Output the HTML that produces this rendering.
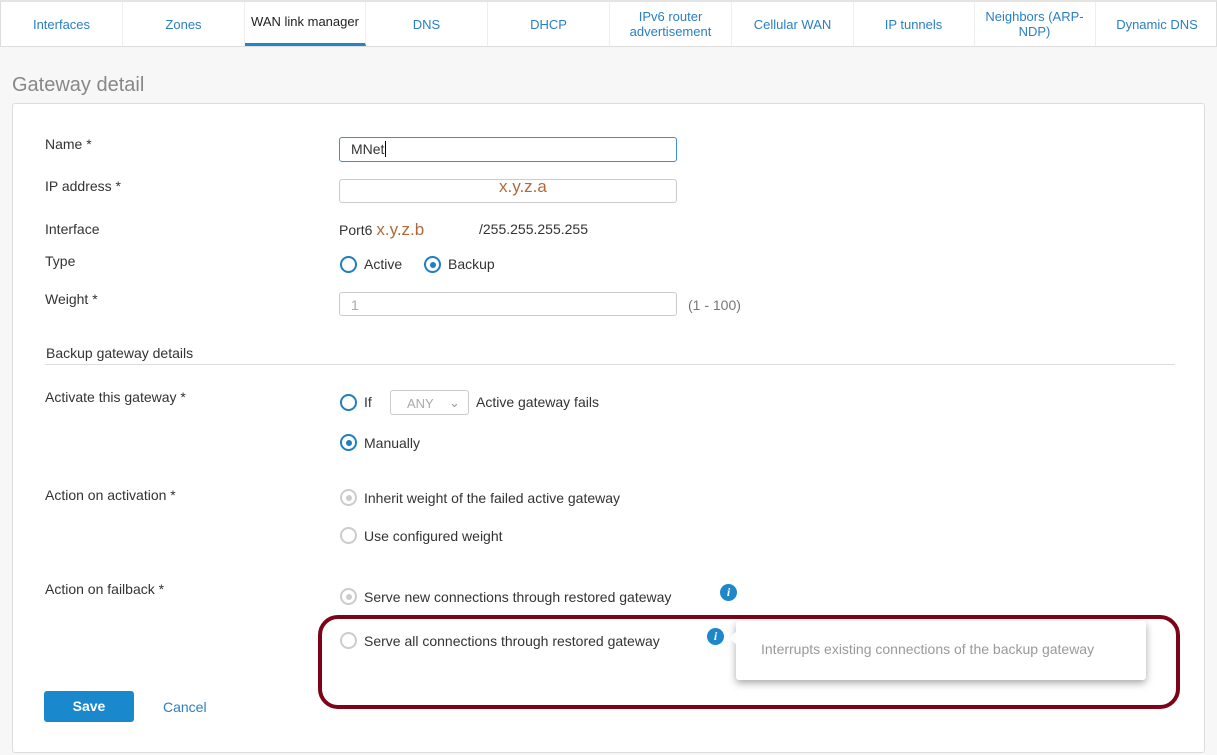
<!DOCTYPE html>
<html><head><meta charset="utf-8"><style>
*{box-sizing:border-box;margin:0;padding:0}
body{width:1217px;height:755px;background:#f7f7f7;font-family:"Liberation Sans",sans-serif;color:#333;position:relative;overflow:hidden;font-size:14px}
.tabs{position:absolute;left:0;top:0;width:1217px;height:47px;background:#fff;border:1px solid #ddd;border-top:2px solid #e4e4e4}
.tab{position:absolute;top:0;height:44px;width:122px;border-right:1px solid #eee;color:#2a7fc4;font-size:13px;text-align:center;display:flex;align-items:center;justify-content:center;line-height:15px}
.tab.act{color:#222;border-bottom:3px solid #1d87c9;padding-bottom:2px}
.a{position:absolute;white-space:nowrap}
h1{position:absolute;left:12px;top:74px;font-weight:normal;font-size:20px;color:#888}
.panel{position:absolute;left:12px;top:103px;width:1193px;height:650px;background:#fff;border:1px solid #ddd;border-radius:3px}
.inp{position:absolute;left:339px;width:338px;height:24px;border:1px solid #ccc;border-radius:3px;background:#fff}
.r{position:absolute;width:17px;height:17px;border-radius:50%;border:2px solid #1d7fc4;background:#fff}
.r.on::after{content:"";position:absolute;left:3.5px;top:3.5px;width:6px;height:6px;border-radius:50%;background:#1d7fc4}
.r.g{border-color:#ccc}
.r.g.on::after{background:#ccc}
.lbl{font-size:14px;color:#333}
.info{position:absolute;width:17px;height:17px;border-radius:50%;background:#1d87c9;color:#fff;font:italic bold 12px "Liberation Serif",serif;text-align:center;line-height:17px}
</style></head><body>
<div class="tabs">
<div class="tab" style="left:0">Interfaces</div>
<div class="tab" style="left:122px">Zones</div>
<div class="tab act" style="left:244px;width:121px">WAN link manager</div>
<div class="tab" style="left:365px">DNS</div>
<div class="tab" style="left:487px">DHCP</div>
<div class="tab" style="left:609px">IPv6 router<br>advertisement</div>
<div class="tab" style="left:731px">Cellular WAN</div>
<div class="tab" style="left:852px">IP tunnels</div>
<div class="tab" style="left:973px">Neighbors (ARP-<br>NDP)</div>
<div class="tab" style="left:1095px;border:none">Dynamic DNS</div>
</div>
<h1>Gateway detail</h1>
<div class="panel"></div>

<div class="a lbl" style="left:45px;top:136px">Name *</div>
<div class="inp" style="top:137px;border-color:#3b8fd0;height:25px"></div>
<div class="a lbl" style="left:351px;top:141px">MNet<span style="border-left:1px solid #000;margin-left:1px"></span></div>

<div class="a lbl" style="left:45px;top:178px">IP address *</div>
<div class="inp" style="top:179px"></div>
<div class="a" style="left:499px;top:177px;font-size:17px;color:#b06a3a">x.y.z.a</div>

<div class="a lbl" style="left:45px;top:221px">Interface</div>
<div class="a lbl" style="left:339px;top:220px">Port6 <span style="font-size:17px;color:#b06a3a">x.y.z.b</span></div>
<div class="a lbl" style="left:479px;top:221px">/255.255.255.255</div>

<div class="a lbl" style="left:45px;top:253px">Type</div>
<div class="r" style="left:340px;top:256px"></div><div class="a lbl" style="left:364px;top:256px">Active</div>
<div class="r on" style="left:424px;top:256px"></div><div class="a lbl" style="left:448px;top:256px">Backup</div>

<div class="a lbl" style="left:45px;top:291px">Weight *</div>
<div class="inp" style="top:292px"></div>
<div class="a" style="left:351px;top:297px;color:#aaa">1</div>
<div class="a" style="left:688px;top:297px;color:#777">(1 - 100)</div>

<div class="a lbl" style="left:46px;top:345px">Backup gateway details</div>
<div class="a" style="left:45px;top:364px;width:1130px;height:1px;background:#ddd"></div>

<div class="a lbl" style="left:45px;top:389px">Activate this gateway *</div>
<div class="r" style="left:340px;top:394px"></div><div class="a lbl" style="left:364px;top:394px">If</div>
<div class="a" style="left:390px;top:390px;width:79px;height:25px;border:1px solid #ccc;border-radius:3px;color:#aaa;font-size:13px;padding:5px 0 0 16px">ANY<span style="position:absolute;left:58px;top:4px;color:#999">&#8964;</span></div>
<div class="a lbl" style="left:476px;top:394px">Active gateway fails</div>
<div class="r on" style="left:340px;top:434px"></div><div class="a lbl" style="left:364px;top:435px">Manually</div>

<div class="a lbl" style="left:45px;top:487px">Action on activation *</div>
<div class="r g on" style="left:340px;top:489px"></div><div class="a lbl" style="left:364px;top:490px">Inherit weight of the failed active gateway</div>
<div class="r g" style="left:340px;top:527px"></div><div class="a lbl" style="left:364px;top:528px">Use configured weight</div>

<div class="a lbl" style="left:45px;top:581px">Action on failback *</div>
<div class="r g on" style="left:340px;top:588px"></div><div class="a lbl" style="left:364px;top:589px">Serve new connections through restored gateway</div>
<div class="info" style="left:720px;top:584px">i</div>
<div class="r g" style="left:340px;top:632px"></div><div class="a lbl" style="left:364px;top:633px">Serve all connections through restored gateway</div>
<div class="info" style="left:707px;top:628px">i</div>

<div class="a" style="left:318px;top:615px;width:862px;height:94px;border:4px solid #7d0318;border-radius:20px"></div>
<div class="a" style="left:736px;top:621px;width:410px;height:59px;background:#fff;border-radius:3px;box-shadow:0 3px 8px rgba(0,0,0,.35);color:#999;font-size:14px;padding:20px 0 0 25px">Interrupts existing connections of the backup gateway</div>
<div class="a" style="left:729px;top:631px;width:0;height:0;border-top:7px solid transparent;border-bottom:7px solid transparent;border-right:8px solid #fff"></div>

<div class="a" style="left:44px;top:691px;width:90px;height:31px;background:#1a88cc;border-radius:3px;color:#fff;font-weight:bold;font-size:14px;text-align:center;line-height:31px">Save</div>
<div class="a" style="left:163px;top:699px;color:#2a7fc4">Cancel</div>
</body></html>
